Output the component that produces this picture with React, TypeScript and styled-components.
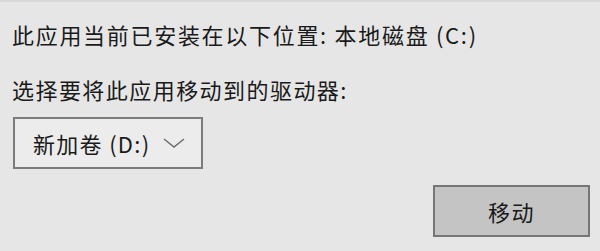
import styled, { createGlobalStyle } from 'styled-components';

const GlobalStyle = createGlobalStyle`
    html, body {
        margin: 0;
        padding: 0;
        background: #e6e6e6;
    }
    body {
        font-family: 'Noto Sans CJK SC', 'Liberation Sans', sans-serif;
        color: #1a1a1a;
    }
`;

const App = () => {
    return (
        <>
            <GlobalStyle />
            <Dialog>
                <Message>此应用当前已安装在以下位置: 本地磁盘 (C:)</Message>
                <Label>选择要将此应用移动到的驱动器:</Label>
                <DriveSelect>
                    <span>新加卷 (D:)</span>
                    <Chevron viewBox="0 0 22 10">
                        <polyline points="1,1 11,9 21,1" />
                    </Chevron>
                </DriveSelect>
                <Footer>
                    <MoveButton>移动</MoveButton>
                </Footer>
            </Dialog>
        </>
    );
};

const Dialog = styled.div`
    width: 600px;
    height: 251px;
    box-sizing: border-box;
    padding: 20px 10px 0 12px;
    display: flex;
    flex-direction: column;
    align-items: flex-start;
    border-top: 2px solid #d8d8d8;
`;

const Message = styled.div`
    font-size: 22px;
    letter-spacing: 1.7px;
    line-height: 24px;
    white-space: nowrap;
`;

const Label = styled(Message)`
    margin-top: 31px;
    letter-spacing: 1.45px;
`;

const DriveSelect = styled.div`
    margin-top: 16px;
    margin-left: 1px;
    width: 190px;
    height: 52px;
    box-sizing: border-box;
    border: 2px solid #7c7c7c;
    background: #ececec;
    display: flex;
    align-items: center;
    justify-content: space-between;
    padding: 0 16px 0 18px;
    font-size: 22px;
    letter-spacing: 1.3px;
`;

const Chevron = styled.svg`
    width: 22px;
    height: 10px;
    fill: none;
    stroke: #6a6a6a;
    stroke-width: 1.4;
`;

const Footer = styled.div`
    align-self: stretch;
    display: flex;
    justify-content: flex-end;
    margin-top: 16px;
`;

const MoveButton = styled.button`
    width: 157px;
    height: 52px;
    box-sizing: border-box;
    border: 2px solid #767676;
    background: #c4c4c4;
    font-family: inherit;
    font-size: 22px;
    letter-spacing: 1.5px;
    color: #1a1a1a;
    padding: 0;
`;

export default App;
